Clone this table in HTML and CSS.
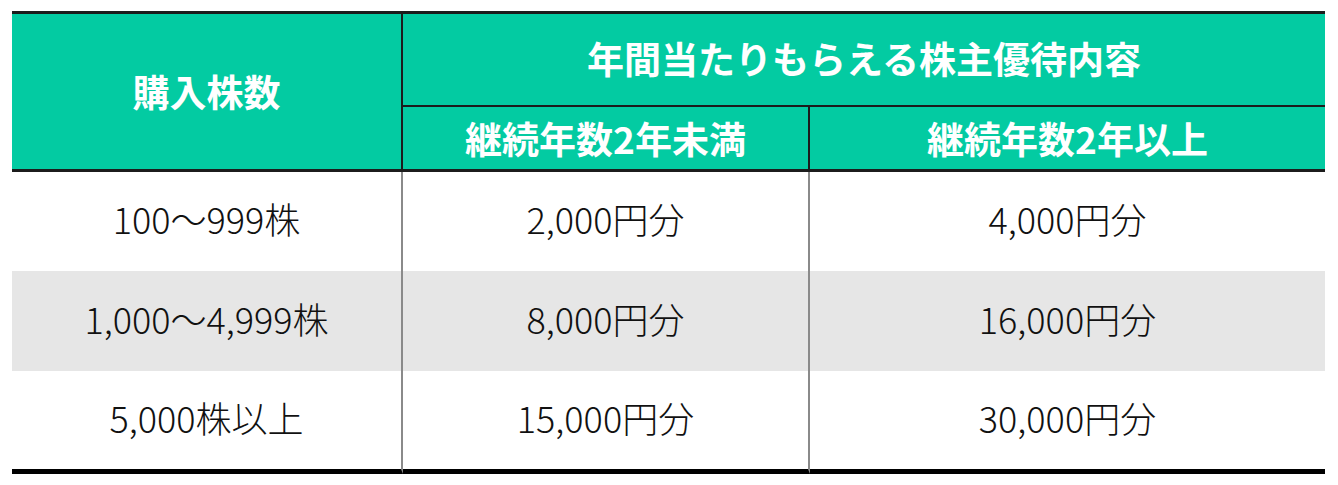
FILE: index.html
```html
<!DOCTYPE html>
<html lang="ja">
<head>
<meta charset="utf-8">
<title>株主優待</title>
<link rel="stylesheet" href="styles.css">
</head>
<body>
<table class="benefits">
  <colgroup>
    <col class="c1">
    <col class="c2">
    <col class="c3">
  </colgroup>
  <thead>
    <tr class="h1">
      <th class="shares" rowspan="2">購入株数</th>
      <th class="group" colspan="2">年間当たりもらえる株主優待内容</th>
    </tr>
    <tr class="h2">
      <th class="sub mid">継続年数2年未満</th>
      <th class="sub">継続年数2年以上</th>
    </tr>
  </thead>
  <tbody>
    <tr class="r1">
      <td class="first">100～999株</td>
      <td class="mid">2,000円分</td>
      <td>4,000円分</td>
    </tr>
    <tr class="r2 alt">
      <td class="first">1,000～4,999株</td>
      <td class="mid">8,000円分</td>
      <td>16,000円分</td>
    </tr>
    <tr class="r3 last">
      <td class="first">5,000株以上</td>
      <td class="mid">15,000円分</td>
      <td>30,000円分</td>
    </tr>
  </tbody>
</table>
</body>
</html>
```

FILE: styles.css
```css
html, body {
  margin: 0;
  padding: 0;
  background: #ffffff;
}

body {
  padding: 11px 0 0 12px;
  font-family: "Noto Sans CJK JP", "Noto Sans", sans-serif;
}

.benefits {
  width: 1313px;
  table-layout: fixed;
  border-collapse: separate;
  border-spacing: 0;
}

.c1 { width: 391px; }
.c2 { width: 407px; }
.c3 { width: 515px; }

.benefits th,
.benefits td {
  padding: 0;
  text-align: center;
  vertical-align: middle;
  box-sizing: border-box;
}

.benefits th {
  background: #03cba2;
  color: #ffffff;
  font-size: 37px;
  font-weight: 700;
  line-height: 1.2;
}

.h1 th {
  border-top: 3px solid #1c1c1c;
}

.h1 .group {
  height: 96px;
  border-bottom: 2px solid #1c1c1c;
  padding-bottom: 2px;
}

.shares {
  border-right: 2px solid #1c1c1c;
  border-bottom: 3px solid #1c1c1c;
}

.h2 th {
  height: 65px;
  border-bottom: 3px solid #1c1c1c;
}

.h2 .mid {
  border-right: 2px solid #1c1c1c;
}

.benefits td {
  font-size: 36px;
  font-weight: 300;
  color: #111111;
  line-height: 1.2;
  padding-bottom: 5px;
}

.benefits td.first,
.benefits td.mid {
  border-right: 2px solid #8a8a8a;
}

.r1 td { height: 99px; }
.r2 td { height: 100px; }
.r3 td {
  height: 103px;
  border-bottom: 5px solid #000000;
}

.alt td {
  background: #e6e6e6;
}
```
